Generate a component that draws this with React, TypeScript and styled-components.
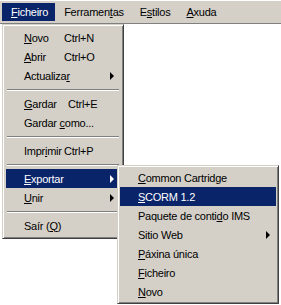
import styled, { createGlobalStyle } from 'styled-components';

const GlobalStyle = createGlobalStyle`
  html, body {
    margin: 0;
    padding: 0;
    background: #ffffff;
  }
  body {
    font-family: "Liberation Sans", Arial, sans-serif;
    font-size: 11px;
    letter-spacing: -0.25px;
    color: #000000;
  }
`;

const Screen = styled.div`
  position: relative;
  width: 281px;
  height: 305px;
  overflow: hidden;
  background: #ffffff;
`;

const MenuBar = styled.div`
  display: flex;
  align-items: center;
  height: 24px;
  padding: 0 2px;
  background: #d4d0c8;
  border-top: 1px solid #ffffff;
  border-bottom: 1px solid #808080;
  box-sizing: border-box;
`;

const BarItem = styled.div<{ $active?: boolean }>`
  display: flex;
  align-items: center;
  height: 18px;
  padding: 0 7px 0 9px;
  background: ${(p) => (p.$active ? '#0a246a' : 'transparent')};
  color: ${(p) => (p.$active ? '#ffffff' : '#000000')};
  white-space: pre;
`;

const Key = styled.span`
  text-decoration: underline;
  text-underline-offset: 1px;
`;

const Dropdown = styled.div<{ $left: number; $top: number; $width: number; $pad: number }>`
  position: absolute;
  left: ${(p) => p.$left}px;
  top: ${(p) => p.$top}px;
  width: ${(p) => p.$width}px;
  box-sizing: border-box;
  display: flex;
  flex-direction: column;
  background: #d4d0c8;
  border: 1px solid;
  border-color: #d4d0c8 #404040 #404040 #d4d0c8;
  box-shadow: inset 1px 1px 0 #ffffff, inset -1px -1px 0 #808080;
  padding: ${(p) => p.$pad}px;
`;

const Item = styled.div<{ $active?: boolean }>`
  position: relative;
  display: flex;
  align-items: center;
  height: 19px;
  padding-left: 18px;
  background: ${(p) => (p.$active ? '#0a246a' : 'transparent')};
  color: ${(p) => (p.$active ? '#ffffff' : '#000000')};
`;

const Label = styled.span`
  white-space: pre;
`;

const Shortcut = styled.span<{ $at: number }>`
  position: absolute;
  left: ${(p) => p.$at}px;
  white-space: pre;
`;

const Arrow = styled.span<{ $active?: boolean }>`
  position: absolute;
  right: 6px;
  top: 6px;
  width: 0;
  height: 0;
  border-top: 4px solid transparent;
  border-bottom: 4px solid transparent;
  border-left: 4px solid ${(p) => (p.$active ? '#ffffff' : '#000000')};
`;

const Separator = styled.div`
  height: 9px;
  display: flex;
  align-items: center;
  padding: 0 1px;
  &::after {
    content: '';
    flex: 1;
    height: 0;
    border-top: 1px solid #808080;
    border-bottom: 1px solid #ffffff;
  }
`;

export default function App() {
  return (
    <Screen>
      <GlobalStyle />
      <MenuBar>
        <BarItem $active>
          <Key>F</Key>icheiro
        </BarItem>
        <BarItem>
          Ferramen<Key>t</Key>as
        </BarItem>
        <BarItem>
          E<Key>s</Key>tilos
        </BarItem>
        <BarItem>
          <Key>A</Key>xuda
        </BarItem>
      </MenuBar>

      <Dropdown $left={2} $top={24} $width={122} $pad={3}>
        <Item>
          <Label><Key>N</Key>ovo</Label>
          <Shortcut $at={58}>Ctrl+N</Shortcut>
        </Item>
        <Item>
          <Label><Key>A</Key>brir</Label>
          <Shortcut $at={58}>Ctrl+O</Shortcut>
        </Item>
        <Item>
          <Label>Actualiza<Key>r</Key></Label>
          <Arrow />
        </Item>
        <Separator />
        <Item>
          <Label><Key>G</Key>ardar</Label>
          <Shortcut $at={62}>Ctrl+E</Shortcut>
        </Item>
        <Item>
          <Label>Gardar <Key>c</Key>omo...</Label>
        </Item>
        <Separator />
        <Item>
          <Label>Impr<Key>i</Key>mir</Label>
          <Shortcut $at={58}>Ctrl+P</Shortcut>
        </Item>
        <Separator />
        <Item $active>
          <Label><Key>E</Key>xportar</Label>
          <Arrow $active />
        </Item>
        <Item>
          <Label><Key>U</Key>nir</Label>
          <Arrow />
        </Item>
        <Separator />
        <Item>
          <Label>Saír (<Key>Q</Key>)</Label>
        </Item>
      </Dropdown>

      <Dropdown $left={117} $top={165} $width={162} $pad={2}>
        <Item>
          <Label><Key>C</Key>ommon Cartridge</Label>
        </Item>
        <Item $active>
          <Label><Key>S</Key>CORM 1.2</Label>
        </Item>
        <Item>
          <Label>Paquete de conti<Key>d</Key>o IMS</Label>
        </Item>
        <Item>
          <Label>Sitio Web</Label>
          <Arrow />
        </Item>
        <Item>
          <Label><Key>P</Key>áxina única</Label>
        </Item>
        <Item>
          <Label><Key>F</Key>icheiro</Label>
        </Item>
        <Item>
          <Label><Key>N</Key>ovo</Label>
        </Item>
      </Dropdown>
    </Screen>
  );
}
